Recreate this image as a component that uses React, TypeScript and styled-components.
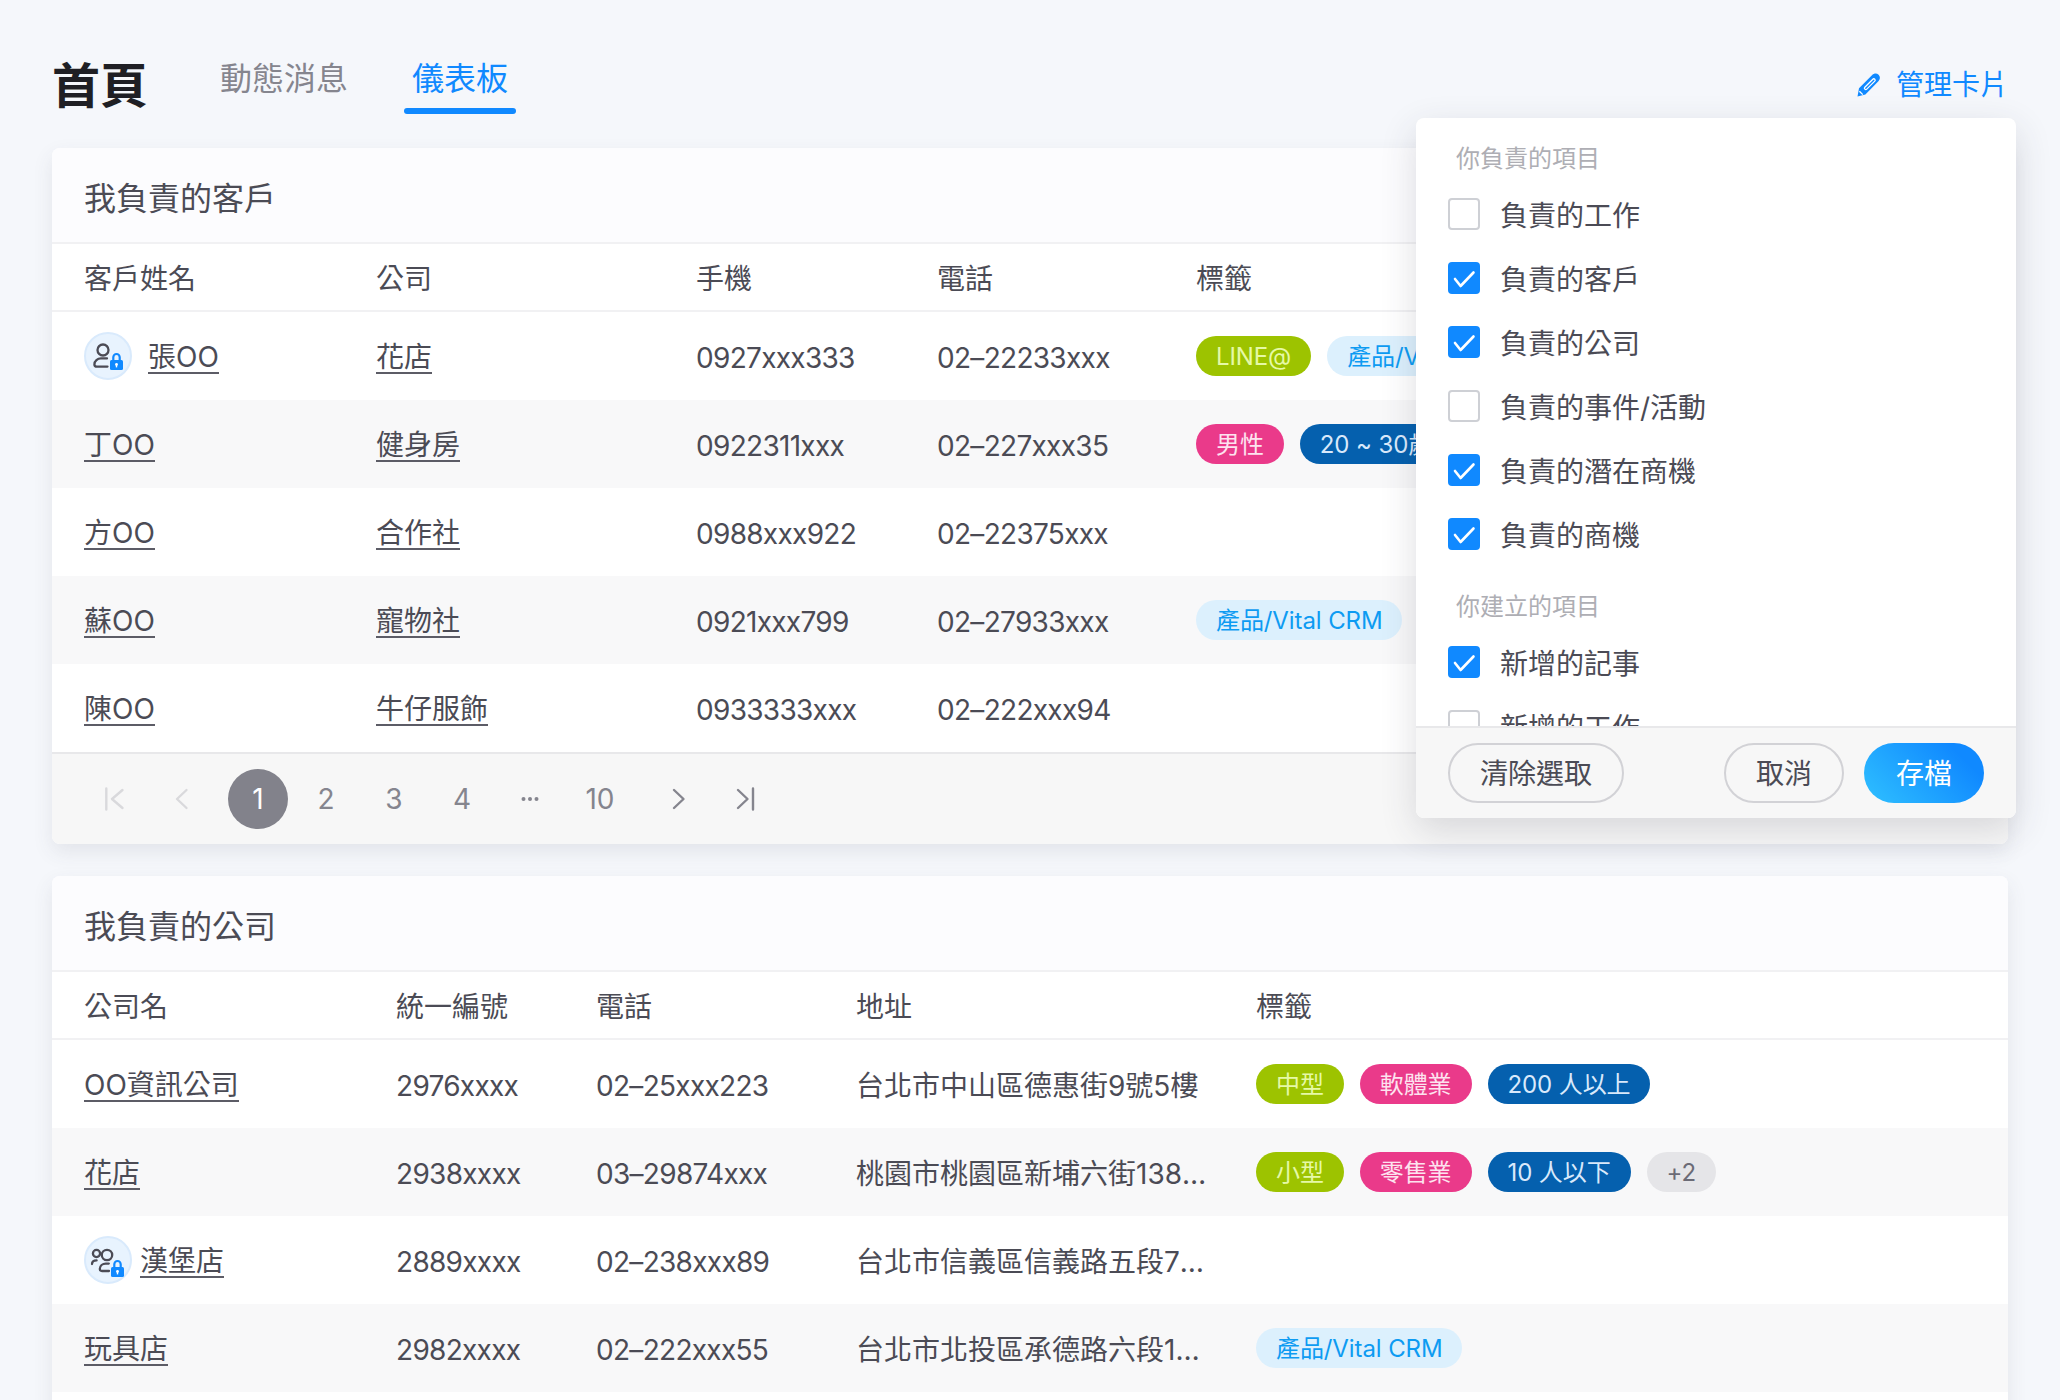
import React from 'react';
import styled, { createGlobalStyle } from 'styled-components';

const GlobalStyle = createGlobalStyle`
  html, body { margin: 0; padding: 0; background: #f5f7fb; }
  * { box-sizing: border-box; }
  body { font-family: Inter, "Noto Sans CJK TC", sans-serif; color: #4b4b55; }
`;

const Page = styled.div`
  position: relative;
  width: 2060px;
  height: 1400px;
  overflow: hidden;
  padding: 0 52px;
  background: #f5f7fb;
`;

const TopBar = styled.header`
  display: flex;
  align-items: flex-start;
  height: 148px;
`;

const PageTitle = styled.h1`
  margin: 54px 64px 0 0;
  font-size: 48px;
  line-height: 64px;
  font-weight: 700;
  color: #1f1f24;
`;

const Tabs = styled.nav`
  display: flex;
  gap: 48px;
  margin-top: 55px;
`;

const Tab = styled.a<{ $active?: boolean }>`
  display: block;
  padding: 0 8px;
  font-size: 32px;
  line-height: 48px;
  color: ${p => (p.$active ? '#1089ff' : '#85858e')};
  &::after {
    content: '';
    display: block;
    height: 6px;
    margin: 5px -8px 0;
    border-radius: 3px;
    background: ${p => (p.$active ? '#1089ff' : 'transparent')};
  }
`;

const ManageLink = styled.a`
  display: flex;
  align-items: center;
  gap: 15px;
  margin: 65px 0 0 auto;
  font-size: 28px;
  line-height: 40px;
  color: #1089ff;
`;

const Card = styled.section`
  border-radius: 8px;
  background: #fff;
  box-shadow: 0 8px 20px rgba(70, 72, 90, 0.1);
  margin-bottom: 32px;
`;

const CardTitle = styled.h2`
  margin: 0;
  height: 96px;
  padding: 8px 32px 0;
  display: flex;
  align-items: center;
  font-size: 32px;
  line-height: 48px;
  font-weight: 400;
  color: #4b4b55;
  background: #fcfcfe;
  border-bottom: 2px solid #f1f1f3;
  border-radius: 8px 8px 0 0;
`;

const Row = styled.div<{ $cols: string; $striped?: boolean }>`
  display: grid;
  grid-template-columns: ${p => p.$cols};
  align-items: center;
  height: 88px;
  padding-left: 32px;
  font-size: 28px;
  line-height: 40px;
  color: #4b4b55;
  background: ${p => (p.$striped ? '#f8f8f9' : '#fff')};
`;

const HeadRow = styled(Row)`
  height: 68px;
  border-bottom: 2px solid #f1f1f3;
`;

const Cell = styled.div`
  display: flex;
  align-items: center;
  min-width: 0;
  padding-top: 4px;
  white-space: nowrap;
`;

const NumCell = styled(Cell)`
  padding-top: 3px;
  letter-spacing: -0.7px;
`;

const TagCell = styled.div`
  min-width: 0;
`;

const NameCell = styled.div<{ $gap?: number }>`
  display: flex;
  align-items: center;
  min-width: 0;
  white-space: nowrap;
  gap: ${p => p.$gap ?? 16}px;
`;

const Address = styled.div`
  width: 352px;
  overflow: hidden;
  white-space: nowrap;
  text-overflow: ellipsis;
`;

const LinkText = styled.a`
  color: #4b4b55;
  padding-top: 4px;
  line-height: 30px;
  border-bottom: 2px solid #5c5c66;
`;

const AvatarBadge = styled.span`
  flex: none;
  display: block;
  width: 48px;
  height: 48px;
  border-radius: 50%;
  background: #e8f3fe;
  border: 2px solid #d9eafc;
`;

const AvatarSvg = styled.svg`
  display: block;
  margin: -2px;
`;

const Tags = styled.div`
  display: flex;
  gap: 16px;
  white-space: nowrap;
`;

const TAG = {
  green: ['#9dc300', '#e6f9a6'],
  pink: ['#ea3a8a', '#fde3ef'],
  blue: ['#0560ae', '#d9e9fb'],
  sky: ['#dcf0fd', '#0d9bf2'],
  grey: ['#e5e5e8', '#6b6b76'],
};

const Tag = styled.span<{ $kind: keyof typeof TAG }>`
  flex: none;
  height: 40px;
  padding: 2px 20px 0;
  border-radius: 20px;
  font-size: 24px;
  line-height: 38px;
  letter-spacing: -0.1px;
  background: ${p => TAG[p.$kind][0]};
  color: ${p => TAG[p.$kind][1]};
`;

const Pager = styled.div`
  display: flex;
  align-items: center;
  height: 92px;
  padding-left: 32px;
  background: #f7f7f7;
  border-top: 2px solid #e8e8ea;
  border-radius: 0 0 8px 8px;
`;

const PageList = styled.div`
  display: flex;
  gap: 8px;
  margin: 0 16px;
`;

const NavList = styled.div`
  display: flex;
  gap: 8px;
`;

const PageButton = styled.span<{ $active?: boolean; $wide?: boolean }>`
  display: flex;
  align-items: center;
  justify-content: center;
  width: ${p => (p.$wide ? 64 : 60)}px;
  height: 60px;
  border-radius: 50%;
  font-size: 28px;
  color: ${p => (p.$active ? '#fff' : '#85858e')};
  background: ${p => (p.$active ? '#82828b' : 'transparent')};
`;

const Popup = styled.aside`
  position: absolute;
  left: 1416px;
  top: 118px;
  width: 600px;
  height: 700px;
  display: flex;
  flex-direction: column;
  border-radius: 8px;
  background: #fff;
  box-shadow: 0 12px 36px rgba(50, 52, 70, 0.16);
`;

const PopupList = styled.div`
  flex: 1;
  min-height: 0;
  overflow: hidden;
  padding: 21px 32px 0;
`;

const GroupLabel = styled.div`
  padding: 0 0 0 8px;
  margin-bottom: 3px;
  font-size: 24px;
  line-height: 40px;
  color: #aeaeb4;
`;

const Group = styled.div`
  margin-bottom: 21px;
`;

const CheckRow = styled.label`
  display: flex;
  align-items: center;
  gap: 20px;
  height: 64px;
  font-size: 28px;
  color: #4b4b55;
`;

const Box = styled.span<{ $checked?: boolean }>`
  flex: none;
  display: flex;
  align-items: center;
  justify-content: center;
  width: 32px;
  height: 32px;
  border-radius: 4px;
  background: ${p => (p.$checked ? '#1089ff' : '#fff')};
  border: ${p => (p.$checked ? 'none' : '2px solid #ced0d5')};
`;

const PopupFooter = styled.footer`
  flex: none;
  display: flex;
  align-items: center;
  justify-content: space-between;
  height: 92px;
  padding: 0 32px;
  background: #f7f7f7;
  border-top: 2px solid #e8e8ea;
  border-radius: 0 0 8px 8px;
`;

const FooterGroup = styled.div`
  display: flex;
  gap: 20px;
`;

const PillButton = styled.button<{ $primary?: boolean }>`
  height: 60px;
  padding: 1px ${p => (p.$primary ? 32 : 30)}px 0;
  border-radius: 30px;
  font-family: inherit;
  font-size: 28px;
  line-height: 40px;
  color: ${p => (p.$primary ? '#fff' : '#4b4b55')};
  background: ${p => (p.$primary ? 'linear-gradient(45deg, #2fc0ff, #1089ff 80%)' : 'transparent')};
  border: ${p => (p.$primary ? 'none' : '2px solid #d2d2d6')};
`;

const Pencil = () => (
  <svg width="24" height="24" viewBox="0 0 24 24">
    <path d="M.5 23.5 2 15.2 15.2 2c2-2 4.6-2 6.4-.2s1.8 4.4-.2 6.4L8.4 21.6z" fill="#1089ff" />
    <path d="M8.8 15.2 16.8 7.2" stroke="#fff" strokeWidth="4" strokeLinecap="round" />
    <path d="M8.8 15.2 16.8 7.2" stroke="#1089ff" strokeWidth="1.4" strokeLinecap="round" />
    <path d="M2.4 18.2 5.8 21.6" stroke="#fff" strokeWidth="1.3" />
  </svg>
);

const Lock = ({ x, y }: { x: number; y: number }) => (
  <g>
    <path d={`M${x + 3.3} ${y} v-2.8 a3.2 3.2 0 0 1 6.4 0 v2.8`} fill="none" stroke="#1089ff" strokeWidth="2.2" />
    <rect x={x} y={y} width="13" height="10" rx="1.5" fill="#1089ff" />
    <circle cx={x + 6.5} cy={y + 4.4} r="1.4" fill="#fff" />
    <rect x={x + 5.8} y={y + 4.4} width="1.4" height="3" fill="#fff" />
  </g>
);

const UserAvatar = () => (
  <AvatarBadge>
    <AvatarSvg width="48" height="48" viewBox="0 0 48 48">
      <g fill="none" stroke="#4b4b55" strokeWidth="2.3" strokeLinecap="round">
        <circle cx="19" cy="18" r="5.5" />
        <path d="M23.5 34.6H13c-1.6 0-2.6-.9-2.6-2.2 0-3.6 3.2-6 6.6-6H23" />
      </g>
      <Lock x={26} y={28} />
    </AvatarSvg>
  </AvatarBadge>
);

const GroupAvatar = () => (
  <AvatarBadge>
    <AvatarSvg width="48" height="48" viewBox="0 0 48 48">
      <g fill="none" stroke="#4b4b55" strokeWidth="2.3" strokeLinecap="round">
        <circle cx="12.5" cy="17.5" r="3.6" />
        <path d="M8 28c0-2.2 2-3.6 4.6-3.6" />
        <circle cx="23" cy="19" r="5.2" />
        <path d="M25 35H18c-1.4 0-2.2-.8-2.2-2 0-3.2 2.8-5.4 6-5.4h3" />
      </g>
      <Lock x={27} y={31} />
    </AvatarSvg>
  </AvatarBadge>
);

const PagerIcon = ({ d, faded }: { d: string; faded?: boolean }) => (
  <svg width="24" height="24" viewBox="0 0 24 24" fill="none" stroke={faded ? '#d9d9dc' : '#85858e'} strokeWidth="2.4" strokeLinecap="round" strokeLinejoin="round">
    <path d={d} />
  </svg>
);

const Check = () => (
  <svg width="32" height="32" viewBox="0 0 32 32" fill="none" stroke="#fff" strokeWidth="2.6" strokeLinecap="round" strokeLinejoin="round">
    <path d="M7 17l5.6 7L25.5 10.5" />
  </svg>
);

const COLS1 = '292px 320px 241px 259px 1fr';
const COLS2 = '312px 200px 260px 400px 1fr';

type TagDef = [string, keyof typeof TAG];
const customers: { name: string; lock?: boolean; co: string; m: string; t: string; tags: TagDef[] }[] = [
  { name: '張OO', lock: true, co: '花店', m: '0927xxx333', t: '02–22233xxx', tags: [['LINE@', 'green'], ['產品/Vital CRM', 'sky']] },
  { name: '丁OO', co: '健身房', m: '0922311xxx', t: '02–227xxx35', tags: [['男性', 'pink'], ['20 ~ 30歲', 'blue']] },
  { name: '方OO', co: '合作社', m: '0988xxx922', t: '02–22375xxx', tags: [] },
  { name: '蘇OO', co: '寵物社', m: '0921xxx799', t: '02–27933xxx', tags: [['產品/Vital CRM', 'sky']] },
  { name: '陳OO', co: '牛仔服飾', m: '0933333xxx', t: '02–222xxx94', tags: [] },
];

const companies: { name: string; lock?: boolean; id: string; t: string; addr: string; tags: TagDef[] }[] = [
  { name: 'OO資訊公司', id: '2976xxxx', t: '02–25xxx223', addr: '台北市中山區德惠街9號5樓', tags: [['中型', 'green'], ['軟體業', 'pink'], ['200 人以上', 'blue']] },
  { name: '花店', id: '2938xxxx', t: '03–29874xxx', addr: '桃園市桃園區新埔六街138號2樓之5', tags: [['小型', 'green'], ['零售業', 'pink'], ['10 人以下', 'blue'], ['+2', 'grey']] },
  { name: '漢堡店', lock: true, id: '2889xxxx', t: '02–238xxx89', addr: '台北市信義區信義路五段7號101樓', tags: [] },
  { name: '玩具店', id: '2982xxxx', t: '02–222xxx55', addr: '台北市北投區承德路六段123號5樓', tags: [['產品/Vital CRM', 'sky']] },
];

const group1: [string, boolean][] = [
  ['負責的工作', false],
  ['負責的客戶', true],
  ['負責的公司', true],
  ['負責的事件/活動', false],
  ['負責的潛在商機', true],
  ['負責的商機', true],
];
const group2: [string, boolean][] = [
  ['新增的記事', true],
  ['新增的工作', false],
];

const renderTags = (tags: TagDef[]) => (
  <Tags>
    {tags.map(([label, kind]) => (
      <Tag key={label} $kind={kind}>{label}</Tag>
    ))}
  </Tags>
);

const renderChecks = (items: [string, boolean][]) =>
  items.map(([label, on]) => (
    <CheckRow key={label}>
      <Box $checked={on}>{on && <Check />}</Box>
      {label}
    </CheckRow>
  ));

export default function App() {
  return (
    <Page>
      <GlobalStyle />
      <TopBar>
        <PageTitle>首頁</PageTitle>
        <Tabs>
          <Tab>動態消息</Tab>
          <Tab $active>儀表板</Tab>
        </Tabs>
        <ManageLink><Pencil />管理卡片</ManageLink>
      </TopBar>

      <Card>
        <CardTitle>我負責的客戶</CardTitle>
        <HeadRow $cols={COLS1}>
          <Cell>客戶姓名</Cell><Cell>公司</Cell><Cell>手機</Cell><Cell>電話</Cell><Cell>標籤</Cell>
        </HeadRow>
        {customers.map((c, i) => (
          <Row key={c.name} $cols={COLS1} $striped={i % 2 === 1}>
            <NameCell>
              {c.lock && <UserAvatar />}
              <LinkText>{c.name}</LinkText>
            </NameCell>
            <NameCell><LinkText>{c.co}</LinkText></NameCell>
            <NumCell>{c.m}</NumCell>
            <NumCell>{c.t}</NumCell>
            <TagCell>{renderTags(c.tags)}</TagCell>
          </Row>
        ))}
        <Pager>
          <NavList>
            <PageButton><PagerIcon faded d="M4.3 1.5v21M20.5 3L10 12l10.5 9" /></PageButton>
            <PageButton><PagerIcon faded d="M16.5 3L7 12l9.5 9" /></PageButton>
          </NavList>
          <PageList>
            <PageButton $active>1</PageButton>
            <PageButton>2</PageButton>
            <PageButton>3</PageButton>
            <PageButton>4</PageButton>
            <PageButton>
              <svg width="20" height="6" viewBox="0 0 20 6" fill="#85858e">
                <circle cx="3.5" cy="3" r="2" /><circle cx="10" cy="3" r="2" /><circle cx="16.5" cy="3" r="2" />
              </svg>
            </PageButton>
            <PageButton $wide>10</PageButton>
          </PageList>
          <NavList>
            <PageButton><PagerIcon d="M8 3l9.5 9L8 21" /></PageButton>
            <PageButton><PagerIcon d="M4 3l9.5 9L4 21M19 1.5v21" /></PageButton>
          </NavList>
        </Pager>
      </Card>

      <Card>
        <CardTitle>我負責的公司</CardTitle>
        <HeadRow $cols={COLS2}>
          <Cell>公司名</Cell><Cell>統一編號</Cell><Cell>電話</Cell><Cell>地址</Cell><Cell>標籤</Cell>
        </HeadRow>
        {companies.map((c, i) => (
          <Row key={c.name} $cols={COLS2} $striped={i % 2 === 1}>
            <NameCell $gap={8}>
              {c.lock && <GroupAvatar />}
              <LinkText>{c.name}</LinkText>
            </NameCell>
            <NumCell>{c.id}</NumCell>
            <NumCell>{c.t}</NumCell>
            <Cell><Address>{c.addr}</Address></Cell>
            <TagCell>{renderTags(c.tags)}</TagCell>
          </Row>
        ))}
        <Row $cols={COLS2} />
      </Card>

      <Popup>
        <PopupList>
          <Group>
            <GroupLabel>你負責的項目</GroupLabel>
            {renderChecks(group1)}
          </Group>
          <Group>
            <GroupLabel>你建立的項目</GroupLabel>
            {renderChecks(group2)}
          </Group>
        </PopupList>
        <PopupFooter>
          <PillButton>清除選取</PillButton>
          <FooterGroup>
            <PillButton>取消</PillButton>
            <PillButton $primary>存檔</PillButton>
          </FooterGroup>
        </PopupFooter>
      </Popup>
    </Page>
  );
}
